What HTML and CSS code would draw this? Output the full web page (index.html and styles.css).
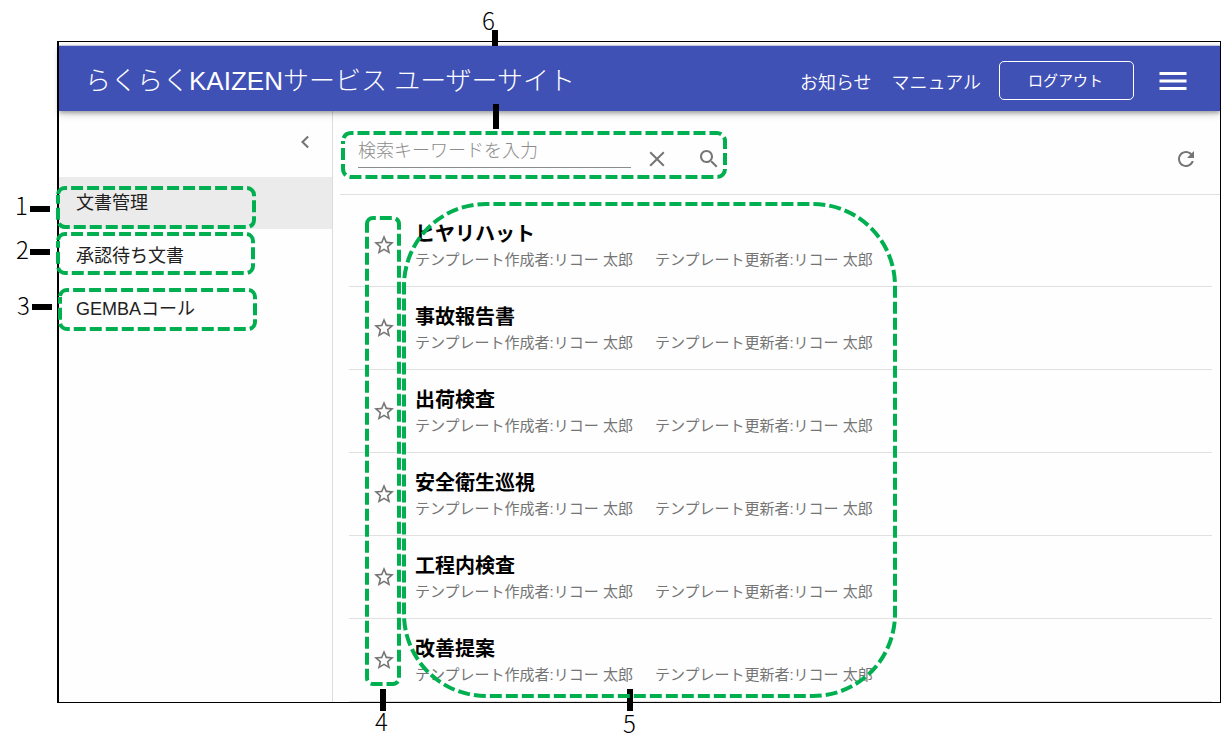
FILE: index.html
```html
<!DOCTYPE html>
<html lang="ja">
<head>
<meta charset="utf-8">
<title>らくらくKAIZENサービス ユーザーサイト</title>
<link rel="stylesheet" href="styles.css">
</head>
<body>
<div class="figure">
  <div class="window">
    <header class="appbar">
      <h1 class="appbar-title">らくらくKAIZENサービス ユーザーサイト</h1>
      <nav class="appbar-nav">
        <a class="appbar-link" href="#">お知らせ</a>
        <a class="appbar-link" href="#">マニュアル</a>
      </nav>
      <button class="logout" type="button">ログアウト</button>
      <button class="icon-button menu-button" type="button" aria-label="メニュー">
        <svg class="menu-icon" viewBox="0 0 36 36"><path d="M4.500 27h27v-3h-27zM4.500 19.500h27v-3h-27zM4.500 9v3h27V9z"/></svg>
      </button>
    </header>
    <div class="body">
      <aside class="sidebar">
        <div class="sidebar-head">
          <button class="icon-button" type="button" aria-label="閉じる">
            <svg class="icon" viewBox="0 0 24 24"><path d="M15.900 7.200 14.400 5.700 8 12l6.400 6.300 1.500-1.500L11 12z"/></svg>
          </button>
        </div>
        <nav class="menu">
          <a class="menu-item menu-item-active" href="#">文書管理</a>
          <a class="menu-item" href="#">承認待ち文書</a>
          <a class="menu-item" href="#">GEMBAコール</a>
        </nav>
      </aside>
      <main class="main">
        <form class="toolbar">
          <input class="search" type="text" placeholder="検索キーワードを入力" aria-label="検索キーワードを入力">
          <button class="icon-button clear-button" type="button" aria-label="クリア">
            <svg class="icon" viewBox="0 0 24 24"><path d="M19.500 5.900 18.100 4.500 12 10.600 5.900 4.500 4.500 5.900l6.100 6.100-6.100 6.100 1.400 1.400 6.100-6.100 6.100 6.100 1.400-1.400-6.100-6.100z"/></svg>
          </button>
          <button class="icon-button search-button" type="button" aria-label="検索">
            <svg class="icon icon-large" viewBox="0 0 24 24"><path d="M15.500 14h-.79l-.28-.27C15.410 12.590 16 11.110 16 9.500 16 5.910 13.090 3 9.500 3S3 5.910 3 9.500 5.910 16 9.500 16c1.610 0 3.090-.59 4.230-1.570l.27.28v.79l5 4.990L20.490 19l-4.990-5zm-6 0C7.010 14 5 11.990 5 9.500S7.010 5 9.500 5 14 7.010 14 9.500 11.990 14 9.500 14z"/></svg>
          </button>
          <button class="icon-button refresh-button" type="button" aria-label="更新">
            <svg class="icon icon-large" viewBox="0 0 24 24"><path d="M17.650 6.350C16.200 4.900 14.210 4 12 4c-4.420 0-7.990 3.580-7.990 8s3.570 8 7.990 8c3.730 0 6.840-2.550 7.730-6h-2.080c-.82 2.330-3.040 4-5.650 4-3.310 0-6-2.690-6-6s2.690-6 6-6c1.660 0 3.140.69 4.220 1.780L13 11h7V4l-2.350 2.350z"/></svg>
          </button>
        </form>
        <ul class="list">
          <li class="row">
            <button class="icon-button star" type="button" aria-label="お気に入り"><svg class="icon" viewBox="0 0 24 24"><use href="#star-path"/></svg></button>
            <div class="row-text"><h2 class="row-title">ヒヤリハット</h2><p class="row-meta"><span>テンプレート作成者:リコー 太郎</span><span>テンプレート更新者:リコー 太郎</span></p></div>
          </li>
          <li class="row">
            <button class="icon-button star" type="button" aria-label="お気に入り"><svg class="icon" viewBox="0 0 24 24"><use href="#star-path"/></svg></button>
            <div class="row-text"><h2 class="row-title">事故報告書</h2><p class="row-meta"><span>テンプレート作成者:リコー 太郎</span><span>テンプレート更新者:リコー 太郎</span></p></div>
          </li>
          <li class="row">
            <button class="icon-button star" type="button" aria-label="お気に入り"><svg class="icon" viewBox="0 0 24 24"><use href="#star-path"/></svg></button>
            <div class="row-text"><h2 class="row-title">出荷検査</h2><p class="row-meta"><span>テンプレート作成者:リコー 太郎</span><span>テンプレート更新者:リコー 太郎</span></p></div>
          </li>
          <li class="row">
            <button class="icon-button star" type="button" aria-label="お気に入り"><svg class="icon" viewBox="0 0 24 24"><use href="#star-path"/></svg></button>
            <div class="row-text"><h2 class="row-title">安全衛生巡視</h2><p class="row-meta"><span>テンプレート作成者:リコー 太郎</span><span>テンプレート更新者:リコー 太郎</span></p></div>
          </li>
          <li class="row">
            <button class="icon-button star" type="button" aria-label="お気に入り"><svg class="icon" viewBox="0 0 24 24"><use href="#star-path"/></svg></button>
            <div class="row-text"><h2 class="row-title">工程内検査</h2><p class="row-meta"><span>テンプレート作成者:リコー 太郎</span><span>テンプレート更新者:リコー 太郎</span></p></div>
          </li>
          <li class="row">
            <button class="icon-button star" type="button" aria-label="お気に入り"><svg class="icon" viewBox="0 0 24 24"><use href="#star-path"/></svg></button>
            <div class="row-text"><h2 class="row-title">改善提案</h2><p class="row-meta"><span>テンプレート作成者:リコー 太郎</span><span>テンプレート更新者:リコー 太郎</span></p></div>
          </li>
        </ul>
      </main>
    </div>
  </div>

  <!-- Numbered callouts over the window -->
  <svg class="callouts" width="1221" height="755" viewBox="0 0 1221 755">
    <defs>
      <path id="star-path" d="M22 9.240l-7.190-.62L12 2 9.190 8.630 2 9.240l5.460 4.730L5.820 21 12 17.270 18.180 21l-1.630-7.030L22 9.240zM12 15.400l-3.760 2.270 1-4.280-3.320-2.880 4.380-.38L12 6.100l1.710 4.040 4.380.38-3.320 2.880 1 4.280L12 15.400z"/>
    </defs>
    <g class="leads">
      <path d="M30 206h20v6H30zM30 249h20v6H30zM32 304h20v6H32zM492 30h6v16h-6zM493 104h6v25h-6zM380 689h6v22h-6zM627 689h6v22h-6z"/>
    </g>
    <g class="outlines">
      <path stroke-dashoffset="-1" d="M58 195a7 7 0 0 1 7-7H247a7 7 0 0 1 7 7V220a7 7 0 0 1-7 7H65a7 7 0 0 1-7-7z"/>
      <path stroke-dashoffset="-1" d="M58 241a7 7 0 0 1 7-7H246a7 7 0 0 1 7 7V266a7 7 0 0 1-7 7H65a7 7 0 0 1-7-7z"/>
      <path stroke-dashoffset="-1" d="M60 297a7 7 0 0 1 7-7H248a7 7 0 0 1 7 7V322a7 7 0 0 1-7 7H67a7 7 0 0 1-7-7z"/>
      <path stroke-dashoffset="-3" d="M343 141a8 8 0 0 1 8-8H717a8 8 0 0 1 8 8V169a8 8 0 0 1-8 8H351a8 8 0 0 1-8-8z"/>
      <path d="M367 224a6 6 0 0 1 6-6H393a6 6 0 0 1 6 6V678a6 6 0 0 1-6 6H373a6 6 0 0 1-6-6z"/>
      <path stroke-dashoffset="-8" d="M404 286a82 82 0 0 1 82-82H813a82 82 0 0 1 82 82V614a82 82 0 0 1-82 82H486a82 82 0 0 1-82-82z"/>
    </g>
    <g class="numbers">
      <text x="15" y="215">1</text>
      <text x="16" y="259">2</text>
      <text x="17" y="315">3</text>
      <text x="375" y="731">4</text>
      <text x="623" y="733">5</text>
      <text x="482" y="30">6</text>
    </g>
  </svg>
</div>
</body>
</html>
```
FILE: styles.css
```css
* {
  box-sizing: border-box;
}

body {
  margin: 0;
  background: #fff;
  color: #212121;
  font-family: "Liberation Sans", "Noto Sans CJK JP", sans-serif;
  font-weight: 400;
}

h1, h2, p, ul {
  margin: 0;
  padding: 0;
}

a {
  color: inherit;
  text-decoration: none;
}

.figure {
  position: relative;
  padding: 41px 0 52px 57px;
}

.window {
  border: 1px solid #000;
  border-left-width: 2px;
  background: #fefefe;
}

.appbar {
  position: relative;
  display: flex;
  align-items: center;
  height: 66px;
  margin-top: 3px;
  padding: 4px 29px 0 26px;
  border-top: 1px solid #c5c8d8;
  background: #3f51b5;
  box-shadow: 0 2px 4px rgba(0, 0, 0, 0.3), 0 4px 8px rgba(0, 0, 0, 0.12);
  color: #fff;
}

.appbar-title {
  flex: 1;
  font-size: 26px;
  font-weight: 300;
  line-height: 40px;
  white-space: nowrap;
}

.appbar-nav {
  display: flex;
  gap: 20px;
  font-size: 18px;
  font-weight: 350;
  white-space: nowrap;
}

.logout {
  width: 135px;
  height: 39px;
  margin: 0 21px 0 18px;
  padding: 0 8px 2px 6px;
  border: 1px solid #fff;
  border-radius: 5px;
  background: none;
  color: #fff;
  font: inherit;
  font-size: 15px;
}

.icon-button {
  display: flex;
  align-items: center;
  justify-content: center;
  flex: none;
  width: 24px;
  height: 24px;
  padding: 0;
  border: 0;
  background: none;
  color: #757575;
}

.icon {
  width: 24px;
  height: 24px;
  fill: currentColor;
}

.icon-large {
  width: 26px;
  height: 26px;
}

.menu-button {
  width: 36px;
  height: 36px;
  color: #fff;
}

.menu-icon {
  width: 36px;
  height: 36px;
  fill: currentColor;
}

.body {
  display: flex;
}

.sidebar {
  width: 274px;
  flex: none;
  border-right: 1px solid #dcdcdc;
}

.sidebar-head {
  display: flex;
  justify-content: flex-end;
  height: 66px;
  padding: 19px 15px 0 0;
}

.menu {
  display: flex;
  flex-direction: column;
  gap: 1px;
}

.menu-item {
  display: flex;
  align-items: center;
  height: 52px;
  padding: 0 0 4px 17px;
  font-size: 18px;
}

.menu-item-active {
  background: #ebebeb;
}

.main {
  flex: 1;
  min-width: 0;
}

.toolbar {
  display: flex;
  align-items: flex-start;
  height: 84px;
  margin-left: 7px;
  padding: 20px 22px 0 18px;
  border-bottom: 1px solid #e0e0e0;
}

.search {
  width: 273px;
  height: 37px;
  padding: 4px 0 0;
  border: 0;
  border-bottom: 1px solid #8c8c8c;
  background: none;
  font: inherit;
  font-size: 18px;
  font-weight: 300;
}

.search::placeholder {
  color: #8c8c8c;
  opacity: 1;
}

.clear-button {
  margin: 16px 0 0 14px;
}

.search-button {
  margin: 16px 0 0 28px;
}

.refresh-button {
  margin: 16px 0 0 auto;
}

.list {
  padding: 9px 8px 0 16px;
  list-style: none;
}

.row {
  display: flex;
  align-items: center;
  gap: 19px;
  height: 83px;
  padding-left: 23px;
  border-bottom: 1px solid #e0e0e0;
}

.row-text {
  padding-top: 4px;
}

.row-title {
  color: #000;
  font-size: 20px;
  font-weight: 700;
  line-height: 26px;
}

.row-meta {
  display: flex;
  gap: 22px;
  color: #757575;
  font-size: 15px;
  line-height: 26px;
  white-space: nowrap;
}

.callouts {
  position: absolute;
  top: 0;
  left: 0;
  pointer-events: none;
}

.leads {
  fill: #000;
}

.outlines {
  fill: none;
  stroke: #00b050;
  stroke-width: 4;
  stroke-dasharray: 12 4;
}

.numbers {
  fill: #000;
  font-family: "Noto Sans CJK JP", sans-serif;
  font-size: 24px;
  font-weight: 300;
}
```
